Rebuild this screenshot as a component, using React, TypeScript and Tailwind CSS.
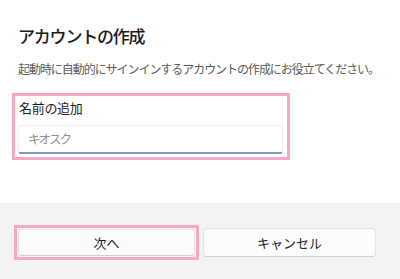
import React from "react"

const jp = { fontFamily: '"Noto Sans CJK JP", "Noto Sans", sans-serif' }

function DialogButton({ label, className = "" }: { label: string; className?: string }) {
  return (
    <button
      className={
        "h-[29px] rounded-[4px] border border-[#e3e3e3] border-b-[#cfcfcf] bg-[#fcfcfc] text-[13px] text-[#1b1b1b] " +
        className
      }
    >
      {label}
    </button>
  )
}

export default function App() {
  return (
    <div className="w-[400px] h-[279px] flex flex-col bg-white overflow-hidden" style={jp}>
      <div className="h-[203px] px-[18px] pt-[24px]">
        <h1 className="text-[17px] leading-[24px] font-medium text-[#1a1a1a] tracking-[-1.2px]">
          アカウントの作成
        </h1>
        <p className="mt-[13px] text-[12px] leading-[16px] text-[#5a5a5a] tracking-[-1.05px] whitespace-nowrap">
          起動時に自動的にサインインするアカウントの作成にお役立てください。
        </p>
        <div className="mt-[16px] -ml-[6px] w-[278px] h-[67px] border-[3px] border-[#f5a9c6] pl-[4px] pt-[4px]">
          <div className="text-[13px] leading-[16px] text-[#1a1a1a] tracking-[-0.3px]">名前の追加</div>
          <div className="mt-[9px] -ml-[1px] w-[265px] h-[29px] rounded-[3px] border border-[#ececec] border-b-2 border-b-[#7f97b8] flex items-center pl-[9px]">
            <span className="text-[12.5px] text-[#8f8f8f] tracking-[-2px]">キオスク</span>
          </div>
        </div>
      </div>
      <div className="flex-1 bg-[#f3f3f3] pt-[22px] pl-[14px] flex items-start">
        <div className="w-[185px] h-[35px] border-[3px] border-[#f5a9c6] p-[1px] flex">
          <DialogButton label="次へ" className="w-full h-full" />
        </div>
        <DialogButton label="キャンセル" className="ml-[4px] mt-[3px] w-[173px]" />
      </div>
    </div>
  )
}
